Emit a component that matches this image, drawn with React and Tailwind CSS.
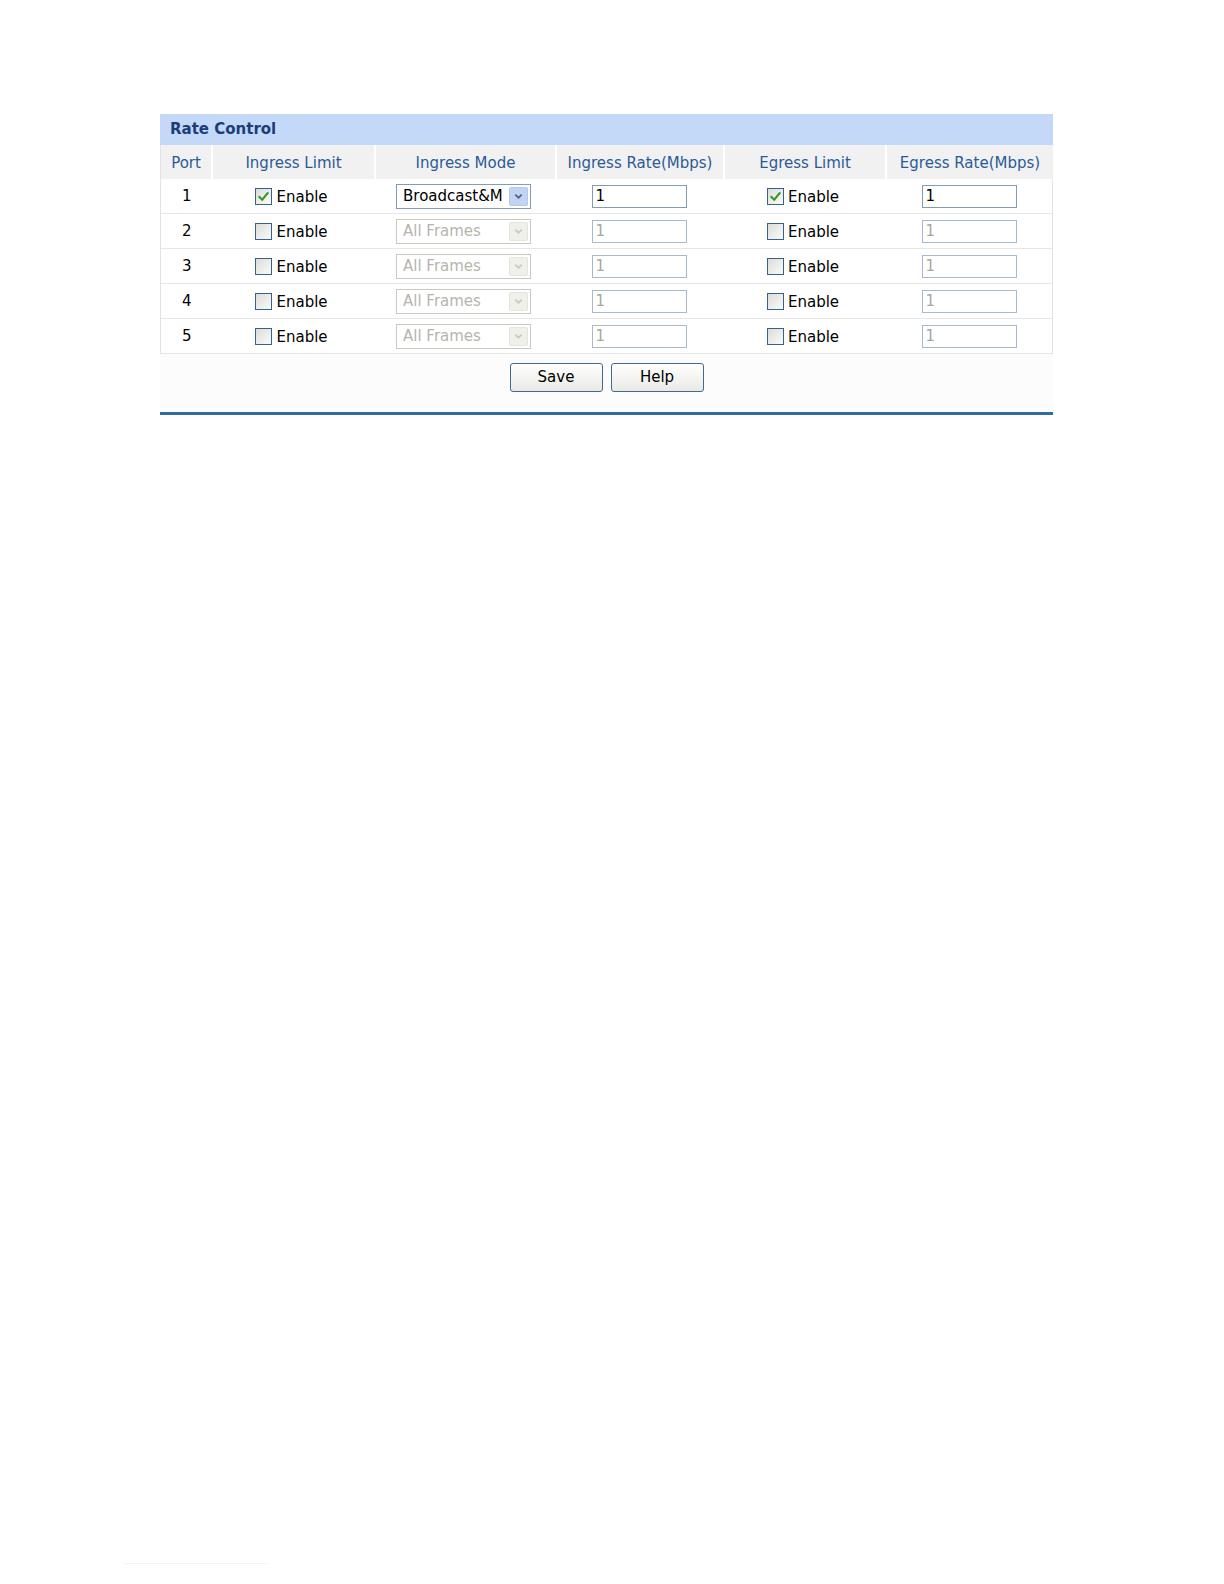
const cols = "grid grid-cols-[50px_163px_181px_168px_162px_168px]";

const Check = ({ checked }) => (
  <span className="inline-flex h-[17px] w-[17px] items-center justify-center border border-[#35608f] bg-gradient-to-br from-[#dcdcd6] to-[#fbfbfa]">
    {checked && (
      <svg viewBox="0 0 16 16" className="h-[13px] w-[13px]">
        <path d="M3 8.5 L6.5 12 L13 4" fill="none" stroke="#2f9a24" strokeWidth="2.6" strokeLinecap="square" />
      </svg>
    )}
  </span>
);

const Enable = ({ checked }) => (
  <div className="flex items-center justify-center gap-[4px] pr-[2px]">
    <Check checked={checked} />
    <span className="pt-[2px] text-[15px] text-black">Enable</span>
  </div>
);

const Select = ({ active }) => (
  <div
    className={
      "flex h-[25px] w-[135px] items-center border pl-[6px] pr-[2px] " +
      (active ? "border-[#7f9db9] bg-white" : "border-[#c9c9c0] bg-white")
    }
  >
    <span className={"flex-1 overflow-hidden whitespace-nowrap text-[15px] " + (active ? "text-black" : "text-[#b5b5ad]")}>
      {active ? "Broadcast&M" : "All Frames"}
    </span>
    <span
      className={
        "flex h-[19px] w-[19px] shrink-0 items-center justify-center rounded-[2px] " +
        (active ? "bg-[#c2d3f4] border border-[#b4c7ec]" : "bg-[#f0f0ea] border border-[#e4e4dc]")
      }
    >
      <svg viewBox="0 0 10 10" className="h-[9px] w-[9px]">
        <path d="M1.5 3 L5 6.5 L8.5 3" fill="none" stroke={active ? "#4d6185" : "#c9c9c0"} strokeWidth="2" />
      </svg>
    </span>
  </div>
);

const Input = ({ active }) => (
  <div
    className={
      "flex h-[23px] w-[95px] items-center border pl-[3px] text-[15px] " +
      (active ? "border-[#7f9db9] text-black" : "border-[#a5b9cf] text-[#a8a8a0]")
    }
  >
    1
  </div>
);

const Row = ({ port, active }) => (
  <div className={cols + " h-[35px] items-center border-b border-[#e6e6e6]"}>
    <div className="pl-[21px] text-[15px] text-black">{port}</div>
    <Enable checked={active} />
    <div className="flex justify-center pr-[2px]">
      <Select active={active} />
    </div>
    <div className="flex justify-center">
      <Input active={active} />
    </div>
    <Enable checked={active} />
    <div className="flex justify-center">
      <Input active={active} />
    </div>
  </div>
);

export default function App() {
  const headers = ["Port", "Ingress Limit", "Ingress Mode", "Ingress Rate(Mbps)", "Egress Limit", "Egress Rate(Mbps)"];
  return (
    <div className="min-h-[1584px] bg-white font-['DejaVu_Sans',Verdana,sans-serif]">
      <div className="pl-[160px] pt-[114px]">
        <div className="w-[893px]">
          {/* titulo */}
          <div className="flex h-[31px] items-center bg-[#c4d8f8] pl-[10px] text-[15px] font-bold text-[#1b3d78]">
            Rate Control
          </div>
          <div className="border-x border-[#e2e2e2]">
            <div className={cols + " h-[34px] bg-white"}>
              {headers.map((h, i) => (
                <div
                  key={h}
                  className={
                    "flex items-center justify-center whitespace-nowrap bg-[#f1f1f1] pt-[2px] text-[15px] text-[#2b5a98] " +
                    (i > 0 ? "border-l-2 border-white" : "")
                  }
                >
                  {h}
                </div>
              ))}
            </div>
            {[1, 2, 3, 4, 5].map((p) => (
              <Row key={p} port={p} active={p === 1} />
            ))}
          </div>
          <div className="flex h-[58px] items-start justify-center gap-[8px] bg-[#fcfcfc] pt-[9px]">
            {["Save", "Help"].map((b) => (
              <button
                key={b}
                className="h-[29px] w-[93px] rounded-[3px] border border-[#3e6a94] bg-gradient-to-b from-white to-[#e9e9e4] text-[15px] text-black"
              >
                {b}
              </button>
            ))}
          </div>
          <div className="h-[3px] bg-[#2f6d9c]" />
        </div>
      </div>
      <div className="ml-[125px] mt-[1148px] h-px w-[142px] bg-[#f3f3e6]" />
    </div>
  );
}
